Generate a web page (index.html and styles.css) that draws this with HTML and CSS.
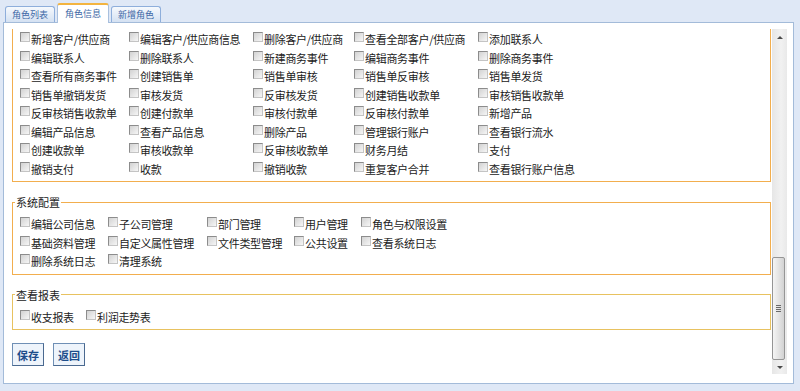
FILE: index.html
```html
<!DOCTYPE html>
<html lang="zh">
<head>
    <meta charset="UTF-8">
    <meta name="viewport" content="width=device-width, initial-scale=1.0">
    <title>角色信息</title>
    <link rel="stylesheet" href="styles.css">
</head>
<body>
    <div class="tabs">
        <div class="tab">角色列表</div>
        <div class="tab active">角色信息</div>
        <div class="tab">新增角色</div>
    </div>

    <div class="panel">
        <div class="viewport">
            <div class="scroll-content">
                <fieldset class="group">
                    <div class="perm-grid cols-main">
                        <label><input type="checkbox">新增客户/供应商</label>
                        <label><input type="checkbox">编辑客户/供应商信息</label>
                        <label><input type="checkbox">删除客户/供应商</label>
                        <label><input type="checkbox">查看全部客户/供应商</label>
                        <label><input type="checkbox">添加联系人</label>

                        <label><input type="checkbox">编辑联系人</label>
                        <label><input type="checkbox">删除联系人</label>
                        <label><input type="checkbox">新建商务事件</label>
                        <label><input type="checkbox">编辑商务事件</label>
                        <label><input type="checkbox">删除商务事件</label>

                        <label><input type="checkbox">查看所有商务事件</label>
                        <label><input type="checkbox">创建销售单</label>
                        <label><input type="checkbox">销售单审核</label>
                        <label><input type="checkbox">销售单反审核</label>
                        <label><input type="checkbox">销售单发货</label>

                        <label><input type="checkbox">销售单撤销发货</label>
                        <label><input type="checkbox">审核发货</label>
                        <label><input type="checkbox">反审核发货</label>
                        <label><input type="checkbox">创建销售收款单</label>
                        <label><input type="checkbox">审核销售收款单</label>

                        <label><input type="checkbox">反审核销售收款单</label>
                        <label><input type="checkbox">创建付款单</label>
                        <label><input type="checkbox">审核付款单</label>
                        <label><input type="checkbox">反审核付款单</label>
                        <label><input type="checkbox">新增产品</label>

                        <label><input type="checkbox">编辑产品信息</label>
                        <label><input type="checkbox">查看产品信息</label>
                        <label><input type="checkbox">删除产品</label>
                        <label><input type="checkbox">管理银行账户</label>
                        <label><input type="checkbox">查看银行流水</label>

                        <label><input type="checkbox">创建收款单</label>
                        <label><input type="checkbox">审核收款单</label>
                        <label><input type="checkbox">反审核收款单</label>
                        <label><input type="checkbox">财务月结</label>
                        <label><input type="checkbox">支付</label>

                        <label><input type="checkbox">撤销支付</label>
                        <label><input type="checkbox">收款</label>
                        <label><input type="checkbox">撤销收款</label>
                        <label><input type="checkbox">重复客户合并</label>
                        <label><input type="checkbox">查看银行账户信息</label>
                    </div>
                </fieldset>

                <fieldset class="group">
                    <legend>系统配置</legend>
                    <div class="perm-grid cols-system">
                        <label><input type="checkbox">编辑公司信息</label>
                        <label><input type="checkbox">子公司管理</label>
                        <label><input type="checkbox">部门管理</label>
                        <label><input type="checkbox">用户管理</label>
                        <label><input type="checkbox">角色与权限设置</label>

                        <label><input type="checkbox">基础资料管理</label>
                        <label><input type="checkbox">自定义属性管理</label>
                        <label><input type="checkbox">文件类型管理</label>
                        <label><input type="checkbox">公共设置</label>
                        <label><input type="checkbox">查看系统日志</label>

                        <label><input type="checkbox">删除系统日志</label>
                        <label><input type="checkbox">清理系统</label>
                    </div>
                </fieldset>

                <fieldset class="group group-report">
                    <legend>查看报表</legend>
                    <div class="perm-grid cols-report">
                        <label><input type="checkbox">收支报表</label>
                        <label><input type="checkbox">利润走势表</label>
                    </div>
                </fieldset>

                <div class="actions">
                    <button class="btn">保存</button>
                    <button class="btn">返回</button>
                </div>
            </div>
        </div>

        <!-- 模擬的捲軸 -->
        <div class="scrollbar">
            <div class="scroll-btn up"></div>
            <div class="scroll-track">
                <div class="scroll-thumb"><span class="grip"></span></div>
            </div>
            <div class="scroll-btn down"></div>
        </div>
    </div>
</body>
</html>
```

FILE: styles.css
```css
body {
    margin: 0;
    background-color: #dfe8f6;
    font-family: "Noto Sans CJK SC", "Noto Sans", sans-serif;
    font-size: 11px;
    color: #222;
}

/* 頁籤 */
.tabs {
    display: flex;
    align-items: flex-end;
    gap: 2px;
    height: 19px;
    padding: 3px 0 0 5px;
}

.tab {
    height: 15px;
    line-height: 15px;
    padding: 0 6px;
    border: 1px solid #8eaedb;
    border-bottom: none;
    border-radius: 3px 3px 0 0;
    background: linear-gradient(#f6f9fd, #d4e1f2);
    color: #3d68a6;
    font-size: 9px;
}

.tab.active {
    height: 18px;
    line-height: 17px;
    padding: 0 7px;
    border-color: #a9c0de;
    border-top: 2px solid #f3b440;
    background: #fff;
    margin-bottom: -1px;
    position: relative;
    z-index: 1;
}

/* 主面板 */
.panel {
    display: flex;
    margin: 0 6px 0 3px;
    padding: 6px 6px 9px 0;
    border: 1px solid #a3bbd9;
    background-color: #fff;
}

.viewport {
    flex: 1;
    height: 345px;
    overflow: hidden;
    display: flex;
    flex-direction: column;
    justify-content: flex-end; /* 已捲到最底 */
}

.scroll-content {
    flex-shrink: 0;
    padding: 0 1px 8px 8px;
}

.group {
    margin: 0 0 13px;
    padding: 6px 7px 3px;
    border: 1px solid #f2ae4e;
    min-width: 0;
}

.group-report {
    border-color: #e8c260;
}

.group legend {
    margin-left: -5px;
    padding: 0 1px;
    line-height: 14px;
    font-size: 11px;
}

.perm-grid {
    display: grid;
    grid-auto-rows: 18.5px;
}

.cols-main {
    grid-template-columns: 109px 124px 101px 124px auto;
}

.cols-system {
    grid-template-columns: 88px 99px 87px 67px auto;
}

.cols-report {
    grid-template-columns: 66px auto;
}

.perm-grid label {
    display: block;
    line-height: 18.5px;
    white-space: nowrap;
    letter-spacing: -0.3px;
}

.perm-grid input {
    appearance: none;
    -webkit-appearance: none;
    box-sizing: border-box;
    width: 10px;
    height: 10px;
    margin: 2px 1px 0 0;
    vertical-align: top;
    border: 1px solid #8c8c8c;
    border-right-color: #c4c4c4;
    border-bottom-color: #c4c4c4;
    background: linear-gradient(135deg, #d2d2d2, #f6f6f6);
}

/* 按鈕 */
.actions {
    display: flex;
    gap: 9px;
}

.btn {
    width: 32px;
    height: 23px;
    padding: 0;
    border: 1px solid #6f8fb5;
    border-right-color: #4a6990;
    border-bottom-color: #4a6990;
    background-color: #eef4fb;
    color: #1d4d8b;
    font-family: "Noto Sans CJK SC", sans-serif;
    font-size: 11px;
    font-weight: bold;
    cursor: pointer;
}

/* 捲軸 */
.scrollbar {
    width: 15px;
    height: 345px;
    display: flex;
    flex-direction: column;
    background: linear-gradient(to right, #e6e6e6, #f1f1f1 60%, #e9e9e9);
}

.scroll-btn {
    display: flex;
    align-items: center;
    justify-content: center;
}

.scroll-btn.up {
    height: 17px;
}

.scroll-btn.down {
    height: 14px;
}

.scroll-btn.up::before {
    content: "";
    border-left: 3px solid transparent;
    border-right: 3px solid transparent;
    border-bottom: 3px solid #4a4a4a;
}

.scroll-btn.down::before {
    content: "";
    border-left: 3px solid transparent;
    border-right: 3px solid transparent;
    border-top: 3px solid #4a4a4a;
}

.scroll-track {
    flex: 1;
    display: flex;
    flex-direction: column;
    justify-content: flex-end;
}

.scroll-thumb {
    height: 101px;
    margin: 0 2px 0 0;
    border: 1px solid #959595;
    border-radius: 2px;
    background: linear-gradient(to right, #f5f5f5, #e4e4e4 50%, #d2d2d2);
    display: flex;
    align-items: center;
    justify-content: center;
}

.grip {
    width: 5px;
    height: 7px;
    background: repeating-linear-gradient(to bottom, #6a6a6a 0 1px, transparent 1px 2px);
}
```
